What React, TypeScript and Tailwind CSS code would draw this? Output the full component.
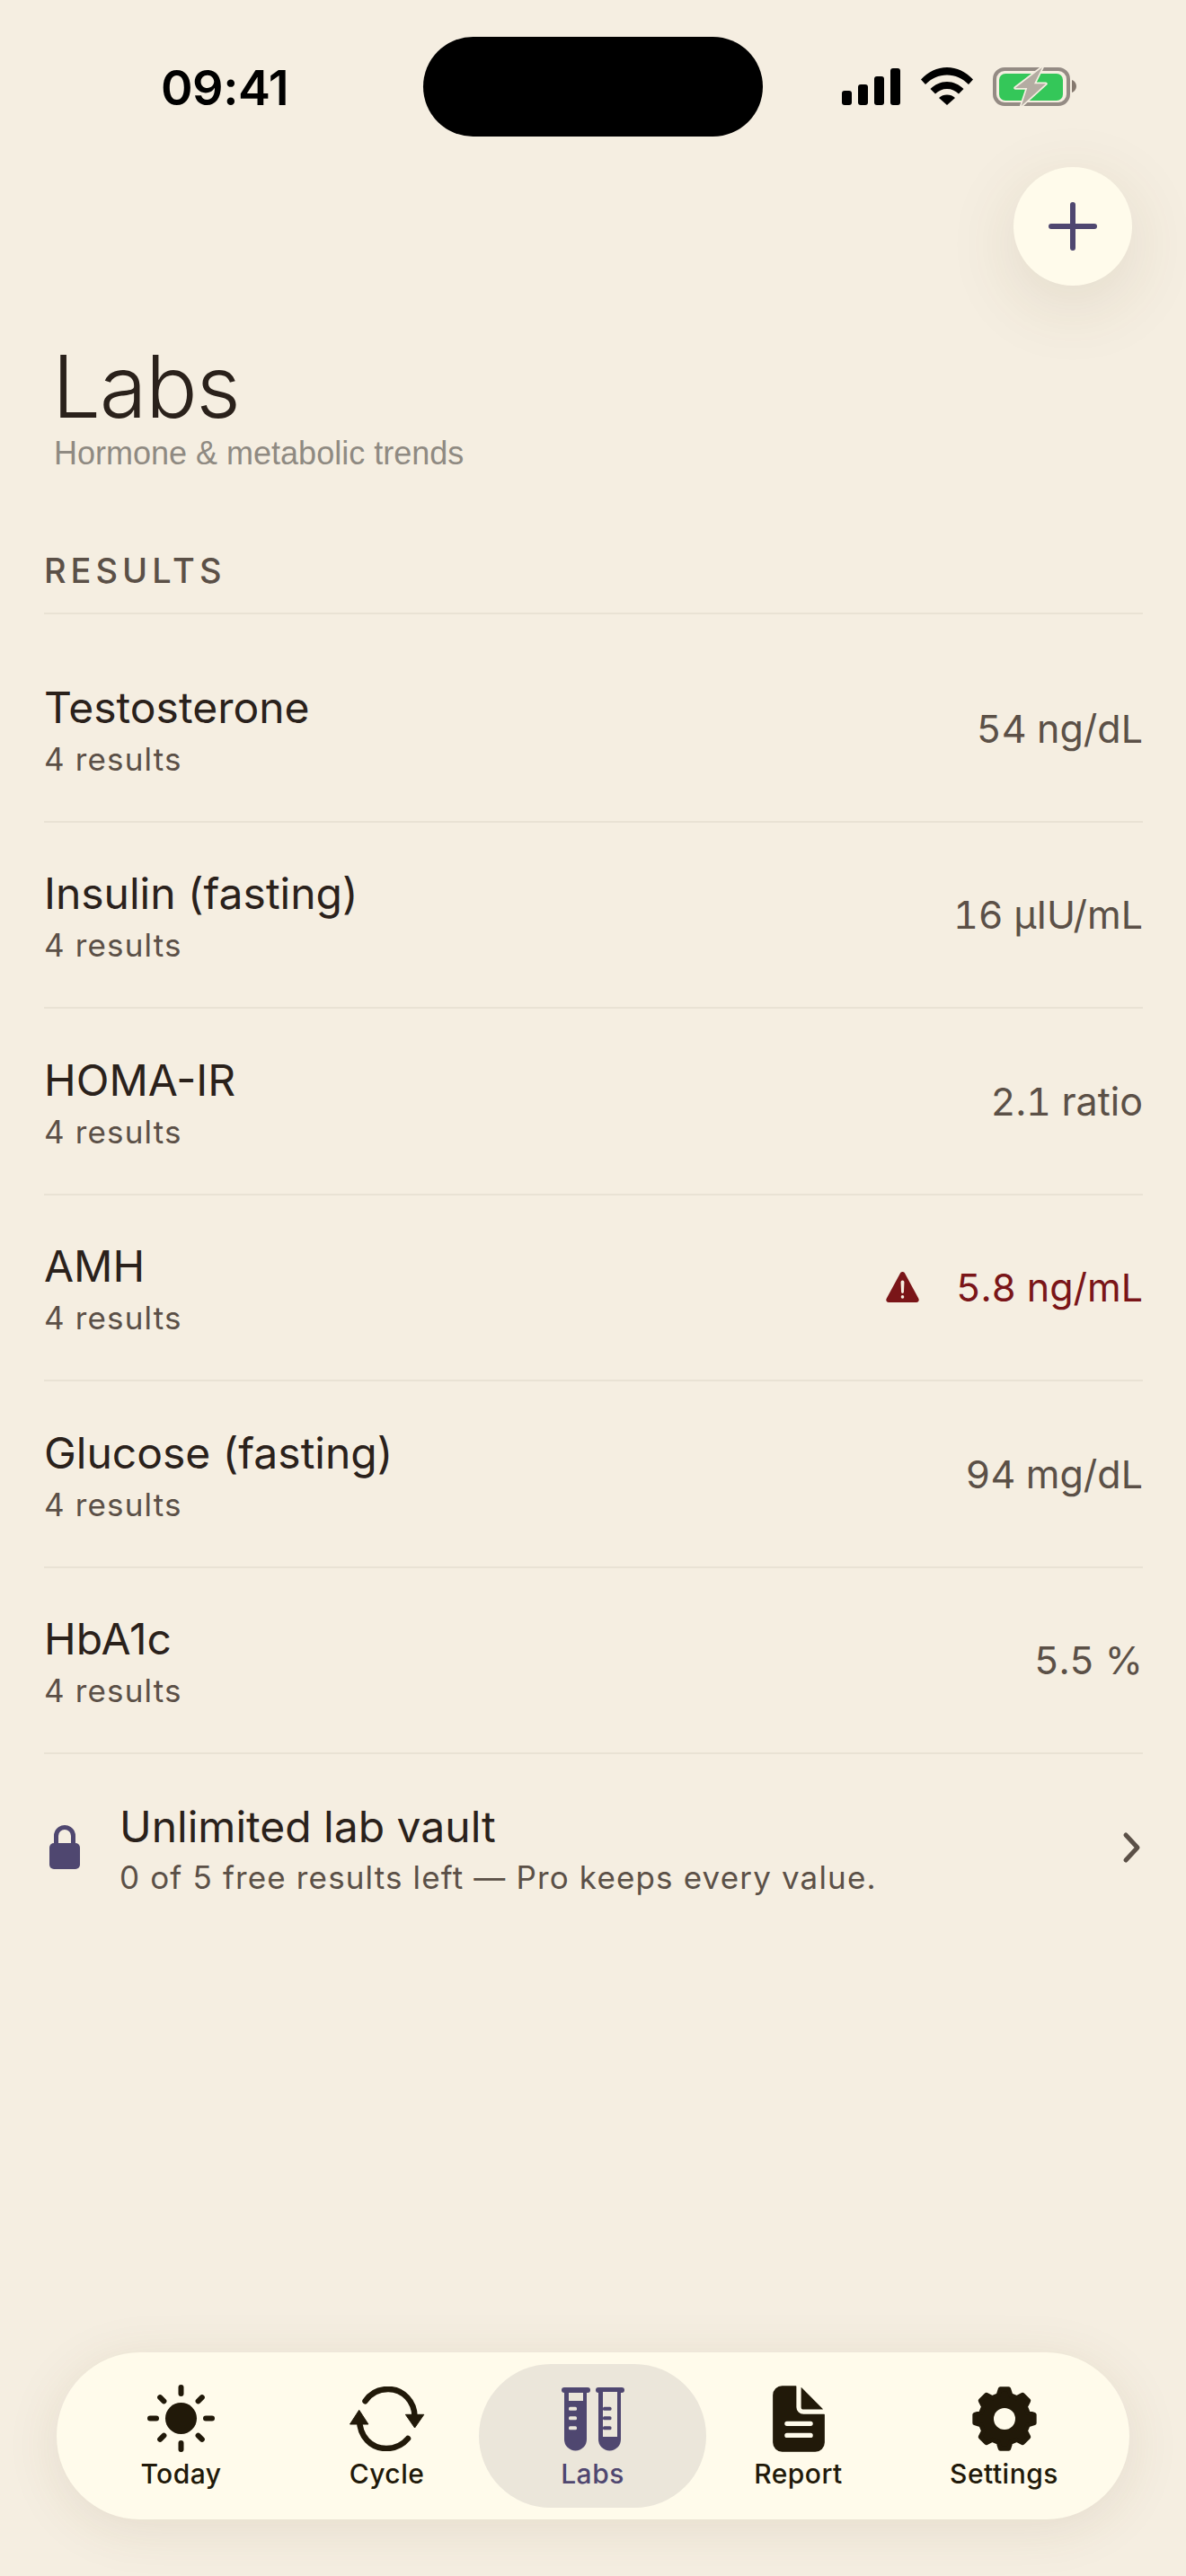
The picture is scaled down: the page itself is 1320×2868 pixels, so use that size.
import type { ReactNode } from "react";
import { IoDocumentText, IoWarning } from "react-icons/io5";

const results = [
  { name: "Testosterone", value: "54 ng/dL" },
  { name: "Insulin (fasting)", value: "16 µIU/mL" },
  { name: "HOMA-IR", value: "2.1 ratio" },
  { name: "AMH", value: "5.8 ng/mL", alert: true },
  { name: "Glucose (fasting)", value: "94 mg/dL" },
  { name: "HbA1c", value: "5.5 %" },
];

function Sun() {
  const rays = [0, 45, 90, 135, 180, 225, 270, 315];
  return (
    <svg width="75" height="75" viewBox="0 0 75 75" fill="currentColor">
      <circle cx="37.500" cy="37.500" r="17.500" />
      {rays.map((deg) => (
        <line
          key={deg}
          x1="37.500"
          y1={deg % 90 === 0 ? 3 : 4.500}
          x2="37.500"
          y2={deg % 90 === 0 ? 10 : 10.500}
          stroke="currentColor"
          strokeWidth="6"
          strokeLinecap="round"
          transform={`rotate(${deg} 37.500 37.500)`}
        />
      ))}
    </svg>
  );
}

function Cycle() {
  return (
    <svg width="84" height="72" viewBox="0 0 84 72" fill="none" stroke="currentColor">
      <path d="M17.500 16.300C23 8 32 3 43 3c17 0 29.600 14 29.600 31" strokeWidth="6.500" strokeLinecap="round" />
      <path d="M65 58c-6 7-14 11-24 11-17 0-30-13-30-33" strokeWidth="6.500" strokeLinecap="round" />
      <path d="M62.400 31.300h20.400L72.600 46zM0.500 42h20.400L10.700 26.300z" fill="currentColor" strokeWidth="1" strokeLinejoin="round" />
    </svg>
  );
}

function TestTubes() {
  return (
    <svg width="70" height="74" viewBox="0 0 70 74" fill="#4f4770">
      <rect x="0" y="2" width="32" height="6" rx="3" />
      <path d="M3 5h25v55a12.500 12.500 0 0 1-25 0z" />
      <rect x="8" y="8" width="16" height="9" fill="#ebe6da" />
      <rect x="8" y="23.700" width="9" height="4" rx="1.500" fill="#ebe6da" />
      <rect x="8" y="34.300" width="9" height="4" rx="1.500" fill="#ebe6da" />
      <rect x="8" y="45.300" width="9" height="4" rx="1.500" fill="#ebe6da" />
      <rect x="38" y="2" width="32" height="6" rx="3" />
      <path d="M41 5h25v55a12.500 12.500 0 0 1-25 0z" />
      <rect x="46" y="7" width="16" height="50" fill="#ebe6da" />
      <rect x="46" y="23.700" width="9.500" height="4" rx="1.500" />
      <rect x="46" y="34.300" width="9.500" height="4" rx="1.500" />
      <rect x="46" y="45.300" width="9.500" height="4" rx="1.500" />
    </svg>
  );
}

function Gear() {
  // eight trapezoid teeth, corners softened by the round stroke
  const pts: string[] = [];
  for (let i = 0; i < 8; i++) {
    const a = (i * 45 * Math.PI) / 180;
    const at = (r: number, d: number) => {
      const t = a + (d * Math.PI) / 180 - Math.PI / 2;
      return `${(37 + r * Math.cos(t)).toFixed(2)},${(37 + r * Math.sin(t)).toFixed(2)}`;
    };
    pts.push(at(27, -15), at(33.500, -8), at(33.500, 8), at(27, 15));
  }
  return (
    <svg width="74" height="74" viewBox="0 0 74 74">
      <polygon points={pts.join(" ")} fill="currentColor" stroke="currentColor" strokeWidth="5" strokeLinejoin="round" />
      <circle cx="37" cy="37" r="12" fill="#fffbeb" />
    </svg>
  );
}

function Lock() {
  return (
    <svg width="34" height="49" viewBox="0 0 34 49" fill="none">
      <path d="M7.500 22V12a9.500 9.500 0 0 1 19 0v10" stroke="#4f4770" strokeWidth="5" />
      <rect x="0" y="20" width="34" height="29" rx="5" fill="#4f4770" />
    </svg>
  );
}

function SignalBars() {
  return (
    <div className="flex items-end gap-[7px]">
      <div className="w-[11px] h-[16px] rounded-[3px] bg-black" />
      <div className="w-[11px] h-[23px] rounded-[3px] bg-black" />
      <div className="w-[11px] h-[32px] rounded-[3px] bg-black" />
      <div className="w-[11px] h-[41px] rounded-[3px] bg-black" />
    </div>
  );
}

function Wifi() {
  return (
    <svg width="58" height="42" viewBox="0 0 58 42" fill="black">
      <path d="M0 13.500C8 5 18 0 29 0s21 5 29 13.500L53 19c-6.500-6.500-15-10.500-24-10.500S11.500 12.500 5 19z" />
      <path d="M10.500 24C15.500 19 22 16 29 16s13.500 3 18.500 8L42 29.500C38.500 26 34 24 29 24s-9.500 2-13 5.500z" />
      <path d="M20 34c2.500-2.500 5.500-3.500 9-3.500s6.500 1 9 3.500L29 42z" />
    </svg>
  );
}

function Battery() {
  return (
    <svg width="94" height="46" viewBox="0 0 94 46">
      <rect x="2" y="3" width="82" height="39" rx="11" fill="none" stroke="#948b84" strokeWidth="4" />
      <rect x="7" y="8" width="71" height="30" rx="7" fill="#34c759" />
      <path d="M88 15c3 1 5 4 5 7s-2 6-5 7z" fill="#85796f" />
      <path d="M55 1L25 24h13.300L31.700 44 59 19.300H46z" fill="#b4aca2" stroke="#f5eee1" strokeWidth="3.500" strokeLinejoin="round" paintOrder="stroke" />
    </svg>
  );
}

function NavItem({ label, active, children }: { label: string; active?: boolean; children: ReactNode }) {
  return (
    <div
      className={`shrink-0 h-[160px] rounded-[80px] flex flex-col items-center justify-center gap-[5px] ${
        active ? "w-[253px] -mx-[12px] bg-[#ebe6da] text-[#4f4770]" : "w-[229px] text-[#211909]"
      }`}
    >
      <div className="h-[78px] flex items-center justify-center">{children}</div>
      <span className="text-[30px] leading-[34px] font-medium tracking-[0.5px]">{label}</span>
    </div>
  );
}

export default function App() {
  return (
    <div className="relative w-[1320px] h-[2868px] overflow-hidden bg-[#f5eee1] font-['Inter',sans-serif] text-[#2a211b]">
      {/* status bar */}
      <div className="h-[186px] relative">
        <div className="absolute left-[179px] top-[68px] text-[54px] leading-[60px] font-semibold tracking-[-0.5px] text-black">09:41</div>
        <div className="absolute left-[471px] top-[41px] w-[378px] h-[111px] rounded-[56px] bg-black" />
        <div className="absolute left-[937px] top-[76px]"><SignalBars /></div>
        <div className="absolute left-[1025px] top-[75px]"><Wifi /></div>
        <div className="absolute left-[1105px] top-[74px]"><Battery /></div>
      </div>

      <div className="flex justify-end pr-[60px]">
        <button className="w-[132px] h-[132px] rounded-full bg-[#fffbeb] flex items-center justify-center shadow-[0_20px_80px_rgba(90,70,30,0.12)]">
          <svg width="54" height="54" viewBox="0 0 54 54" stroke="#4f4770" strokeWidth="6" strokeLinecap="round">
            <path d="M27 3v48M3 27h48" />
          </svg>
        </button>
      </div>

      <div className="px-[58px] mt-[62px]">
        <h1 className="text-[96px] leading-[100px] font-light tracking-[-1.500px] text-[#2a211b]">Labs</h1>
        <p className="mt-[4px] ml-[2px] font-['Liberation_Sans',sans-serif] text-[36px] leading-[42px] text-[#8f8a82]">Hormone &amp; metabolic trends</p>
      </div>

      <div className="pl-[49px] pr-[48px] mt-[87px]">
        <div className="text-[38px] leading-[44px] font-medium tracking-[5px] text-[#5b5047] pb-[25px] border-b-2 border-[#e9e2d4]">RESULTS</div>
        <div className="mt-[24px]">
          {results.map((r) => (
            <div key={r.name} className="h-[207.500px] flex items-center justify-between border-b-2 border-[#e9e2d4]">
              <div className="pt-[3px] flex flex-col gap-[7px]">
                <div className="text-[48px] leading-[58px] text-[#2a211b]">{r.name}</div>
                <div className="text-[35px] leading-[42px] tracking-[1.150px] text-[#5b5047]">4 results</div>
              </div>
              <div className={`flex items-center gap-[36px] text-[43px] tabular-nums ${r.alert ? "text-[#7a1518]" : "text-[#5b5047]"}`}>
                {r.alert && <IoWarning size={46} />}
                <span>{r.value}</span>
              </div>
            </div>
          ))}
        </div>
        <div className="h-[207px] flex items-center">
          <div className="ml-[6px]"><Lock /></div>
          <div className="ml-[44px] flex-1 pt-[3px] flex flex-col gap-[6px]">
            <div className="text-[48px] leading-[58px] text-[#2a211b]">Unlimited lab vault</div>
            <div className="text-[35px] leading-[42px] tracking-[1.150px] text-[#5b5047]">0 of 5 free results left — Pro keeps every value.</div>
          </div>
          <svg className="mr-[1px]" width="22" height="36" viewBox="0 0 22 36" fill="none" stroke="#5b5047" strokeWidth="5" strokeLinecap="round" strokeLinejoin="round">
            <path d="M4 4l13 14L4 32" />
          </svg>
        </div>
      </div>

      {/* tab bar */}
      <div className="absolute left-[63px] top-[2619px] w-[1194px] h-[186px] rounded-[93px] bg-[#fffbeb] shadow-[0_10px_60px_rgba(90,70,30,0.1)] flex items-center px-[24px]">
        <NavItem label="Today"><Sun /></NavItem>
        <NavItem label="Cycle"><Cycle /></NavItem>
        <NavItem label="Labs" active><TestTubes /></NavItem>
        <NavItem label="Report"><IoDocumentText size={84} /></NavItem>
        <NavItem label="Settings"><Gear /></NavItem>
      </div>
    </div>
  );
}
